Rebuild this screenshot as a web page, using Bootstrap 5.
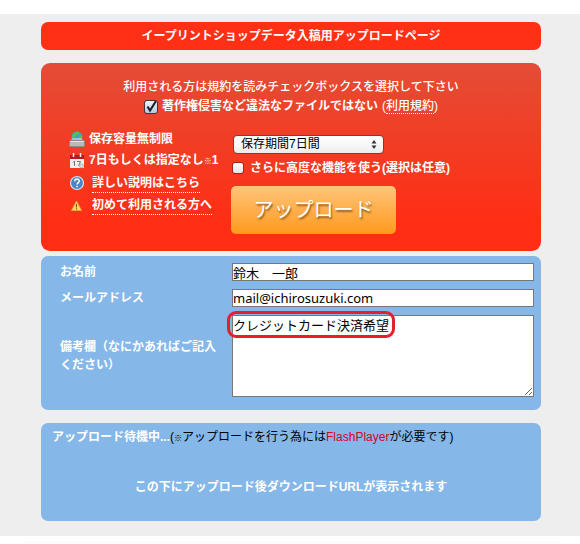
<!DOCTYPE html>
<html lang="ja">
<head>
<meta charset="utf-8">
<meta name="viewport" content="width=device-width, initial-scale=1">
<title>イープリントショップデータ入稿用アップロードページ</title>
<link href="https://cdn.jsdelivr.net/npm/bootstrap@5.3.0/dist/css/bootstrap.min.css" rel="stylesheet">
<style>
body{font-family:"Liberation Sans","Noto Sans CJK JP",sans-serif;font-size:12px;line-height:18px;color:#000;background:#fff}
.page-area{background:#eee;margin-top:14px;padding:8px 39px 15px 41px}
.panel{border-radius:7px}
.title-bar{background:#ff3015;padding:5px;font-size:12px;line-height:18px;margin-bottom:13px}
.terms{background:linear-gradient(#e44c36,#ff2e14 85%);border-radius:9px;padding:15px 7px 17px 28px;margin-bottom:5px}
.terms-head{margin-right:21px;margin-bottom:12px;line-height:19px}
.terms-head .lead-line{font-weight:500}
.dotted{color:#fff;text-decoration:none;border-bottom:1px dotted #fff}
.dotted:hover{color:#ffe}
.features{width:162px}
.features li{height:22px;gap:4px;white-space:nowrap}
.features .spaced{gap:7px}
.features svg{width:16px;height:16px;flex:none}
.kome{font-size:8px;font-weight:700}
.tick{appearance:none;width:12px;height:12px;margin:0;border:1px solid #a3241a;border-radius:3px;background:linear-gradient(#fff,#e6e6e6);flex:none}
.tick:checked{width:14px;height:14px;border-color:#4b3037;background:url("data:image/svg+xml,%3Csvg xmlns='http://www.w3.org/2000/svg' viewBox='0 0 12 12'%3E%3Cpath d='M2.5 5.5 5 9.5 11 0' fill='none' stroke='%23151b2a' stroke-width='2'/%3E%3C/svg%3E") center/12px no-repeat,linear-gradient(#eef3fa,#b9c8dc)}
.period{appearance:none;width:151px;height:19px;padding:0 20px 0 7px;border:1px solid #983126;border-radius:4px;font-size:12px;line-height:17px;color:#000;margin:7px 0 0 2px;background:url("data:image/svg+xml,%3Csvg xmlns='http://www.w3.org/2000/svg' viewBox='0 0 6 9'%3E%3Cpath d='M3 0 5.500 3.500H.5zM3 9 .5 5.500h5z' fill='%23333'/%3E%3C/svg%3E") right 6px center/6px 9px no-repeat,linear-gradient(#fff,#f8f8f8 50%,#ececec)}
.option{margin:5px 0 9px 1px;gap:6px}
.upload-btn,.upload-btn:hover{width:165px;height:48px;padding:0;border:0;border-radius:5px;color:#fff;font-size:20px;font-weight:400;line-height:44px;background:linear-gradient(#ffc57b,#ff991c);text-shadow:1px 2px 2px #8a5a20}
.details{background:#85b7e9;padding:7px 7px 13px 19px;margin-bottom:13px;color:#fff}
.details form{gap:8px}
.details label{width:172px;padding-right:8px;flex:none}
.field{border:1px solid #777;border-radius:0;padding:0;height:18px;font-family:"Noto Sans","Noto Sans CJK JP",sans-serif;font-size:13px;line-height:16px;color:#000;background:#fff;width:100%;display:block}
textarea.field{height:82px;line-height:18px}
.callout{left:-5px;top:-4px;width:168px;height:27px;border:3px solid #e3202c;border-radius:9px;pointer-events:none}
.status{background:#85b7e9;padding:5px 11px 25px;color:#fff}
.status-msg{margin:30px 0 0 0}
.status .note{color:#000}
.status .flash{color:#dc0028;text-decoration:none}
.bottom-edge{height:7px;margin:0 20px;background:linear-gradient(#fff 70%,#fafafa)}
</style>
</head>
<body>
<main class="page-area">
  <h1 class="panel title-bar text-center text-white fw-bold">イープリントショップデータ入稿用アップロードページ</h1>

  <section class="terms text-white">
    <div class="terms-head text-center">
      <div class="lead-line">利用される方は規約を読みチェックボックスを選択して下さい</div>
      <div class="d-flex justify-content-center align-items-center">
        <input class="tick" type="checkbox" id="agree" checked>
        <label class="fw-bold ms-1" for="agree">著作権侵害など違法なファイルではない</label>
        <span class="lead-line ms-1">(<a class="dotted" href="#">利用規約</a>)</span>
      </div>
    </div>
    <div class="d-flex">
      <ul class="features list-unstyled fw-bold mb-0 flex-shrink-0">
        <li class="d-flex align-items-center">
          <svg viewBox="0 0 16 16" aria-hidden="true"><circle cx="8" cy="6" r="5.500" fill="#3f9fd0"/><path d="M4 3q3-3 6-2l-1 3-3 1-1 3-2-2zM10 5l3-1v4l-3 1z" fill="#55c34a"/><path d="M3.500 7h9L15 10.500H1z" fill="#d9dcd8" fill-opacity=".6"/><rect x=".5" y="9.500" width="15" height="6" rx="1" fill="#b9bbb7" stroke="#8a8a88"/><path d="M1.500 10.500h13" stroke="#e4e4e4"/></svg>
          <span>保存容量無制限</span>
        </li>
        <li class="d-flex align-items-center">
          <svg viewBox="0 0 16 16" aria-hidden="true"><path d="M1 2h14v13H1z" fill="#f1eeee"/><path d="M1 2h14v4H1z" fill="#c01820"/><path d="M4.500 0v4M11.500 0v4" stroke="#eee" stroke-width="1.500"/><path d="M4 9.500 5.500 8v5M8 8.500h3.500L9.500 13" fill="none" stroke="#777"/><circle cx="12.500" cy="13" r="2" fill="#ddd" stroke="#999" stroke-width=".6"/></svg>
          <span>7日もしくは指定なし<span class="kome">※</span>1</span>
        </li>
        <li class="spaced d-flex align-items-center">
          <svg viewBox="0 0 16 16" aria-hidden="true"><circle cx="8" cy="8" r="6.500" fill="#4c86c2" stroke="#d3e2f1" stroke-width="1.200"/><path d="M5.800 6.300C5.800 3.300 10.300 3.400 10.300 6 10.300 7.600 8.100 7.600 8.100 9.400M8.100 10.700v1.500" fill="none" stroke="#fff" stroke-width="1.500"/></svg>
          <a class="dotted" href="#">詳しい説明はこちら</a>
        </li>
        <li class="spaced d-flex align-items-center">
          <svg viewBox="0 0 16 16" aria-hidden="true"><path d="M7.500 4 12.500 13.500H2.500z" fill="#ffd76a" stroke="#e5a13a" stroke-linejoin="round"/><path d="M7.500 7v3.500M7.500 11.300v1.200" stroke="#7d5a16" stroke-width="1.200"/></svg>
          <a class="dotted" href="#">初めて利用される方へ</a>
        </li>
      </ul>
      <div class="flex-grow-1">
        <select class="period d-block" aria-label="保存期間"><option>保存期間7日間</option></select>
        <div class="option d-flex align-items-center">
          <input class="tick" type="checkbox" id="advanced">
          <label class="fw-bold" for="advanced">さらに高度な機能を使う(選択は任意)</label>
        </div>
        <button class="btn upload-btn d-block" type="button">アップロード</button>
      </div>
    </div>
  </section>

  <section class="panel details">
    <form class="d-flex flex-column">
      <div class="d-flex align-items-center">
        <label class="fw-bold" for="name">お名前</label>
        <input class="field" type="text" id="name" value="鈴木　一郎">
      </div>
      <div class="d-flex align-items-center">
        <label class="fw-bold" for="mail">メールアドレス</label>
        <input class="field" type="email" id="mail" value="mail@ichirosuzuki.com">
      </div>
      <div class="d-flex align-items-center">
        <label class="fw-bold" for="memo">備考欄（なにかあればご記入ください）</label>
        <div class="position-relative flex-grow-1">
          <textarea class="field" id="memo">クレジットカード決済希望</textarea>
          <div class="callout position-absolute"></div>
        </div>
      </div>
    </form>
  </section>

  <section class="panel status">
    <div><span class="fw-bold">アップロード待機中...</span><span class="note">(<span class="kome">※</span>アップロードを行う為には<a class="flash" href="#">FlashPlayer</a>が必要です)</span></div>
    <p class="status-msg text-center fw-bold mb-0">この下にアップロード後ダウンロードURLが表示されます</p>
  </section>
</main>
<div class="bottom-edge"></div>
<script src="https://cdn.jsdelivr.net/npm/bootstrap@5.3.0/dist/js/bootstrap.bundle.min.js"></script>
</body>
</html>
